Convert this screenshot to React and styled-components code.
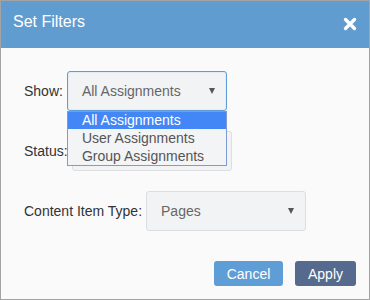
import React from "react"
import styled, { createGlobalStyle } from "styled-components"

const Global = createGlobalStyle`
  html, body {
    margin: 0;
    padding: 0;
    background: #fff;
  }
  body {
    font-family: "Liberation Sans", Arial, sans-serif;
  }
`

const Dialog = styled.div`
  box-sizing: border-box;
  width: 370px;
  height: 300px;
  border: 1px solid #a3a3a3;
  background: #fafafa;
  display: flex;
  flex-direction: column;
`

const Header = styled.header`
  height: 47px;
  background: #619cd1;
  display: flex;
  align-items: center;
  justify-content: space-between;
  padding: 0 12px 0 12px;
  box-sizing: border-box;
`

const Title = styled.h2`
  margin: 0;
  margin-top: -6px;
  font-size: 16px;
  font-weight: normal;
  color: #fff;
`

const Close = styled.button`
  border: 0;
  background: none;
  padding: 0;
  width: 14px;
  height: 14px;
  display: flex;
  cursor: pointer;
  margin-top: -1px;
`

const Body = styled.div`
  flex: 1;
  padding: 23px 13px 0 23px;
  display: flex;
  flex-direction: column;
  gap: 20px;
`

const Row = styled.div`
  display: flex;
  align-items: center;
  gap: 4px;
  position: relative;
  z-index: ${({ $top }) => ($top ? 2 : 1)};
`

const Label = styled.label`
  font-size: 14px;
  color: #333;
`

const Select = styled.div`
  position: relative;
  box-sizing: border-box;
  width: 160px;
  height: 40px;
  border: 1px solid ${({ $focus }) => ($focus ? "#5d9ddb" : "#dcdee2")};
  box-shadow: ${({ $focus }) => ($focus ? "inset 0 0 0 1px #e4ecf6" : "none")};
  border-radius: 3px;
  background: #f2f3f5;
  display: flex;
  align-items: center;
  padding: 0 0 0 14px;
  font-size: 14px;
  color: #666;
`

const Arrow = styled.span`
  position: absolute;
  right: 11px;
  top: 50%;
  margin-top: -3px;
  width: 0;
  height: 0;
  border-left: 3.5px solid transparent;
  border-right: 3.5px solid transparent;
  border-top: 6px solid #555;
`

const Menu = styled.ul`
  position: absolute;
  left: -1px;
  top: calc(100% + 1px);
  width: 160px;
  box-sizing: border-box;
  margin: 0;
  padding: 0;
  list-style: none;
  background: #f3f4f6;
  border: 1px solid #7f9bd6;
`

const Option = styled.li`
  height: ${({ $active }) => ($active ? 17 : 18)}px;
  line-height: ${({ $active }) => ($active ? 17 : 18)}px;
  padding-left: 14px;
  font-size: 14px;
  color: ${({ $active }) => ($active ? "#fff" : "#555")};
  background: ${({ $active }) => ($active ? "#4287f5" : "transparent")};
`

const Footer = styled.div`
  display: flex;
  justify-content: flex-end;
  gap: 12px;
  padding: 0 13px 13px 0;
`

const Button = styled.button`
  height: 25px;
  width: ${({ $w }) => $w}px;
  border: 0;
  border-radius: 3px;
  font-family: "Liberation Sans", Arial, sans-serif;
  font-size: 14px;
  color: #fff;
  background: ${({ $primary }) => ($primary ? "#566a8d" : "#5f9dd6")};
  padding: 0;
  cursor: pointer;
`

export default function App() {
  const options = ["All Assignments", "User Assignments", "Group Assignments"]
  return (
    <>
      <Global />
      <Dialog>
        <Header>
          <Title>Set Filters</Title>
          <Close aria-label="Close">
            <svg width="14" height="14" viewBox="0 0 14 14">
              <path d="M2.5 2.5 L11.5 11.5 M11.5 2.5 L2.5 11.5" stroke="#fff" strokeWidth="3.4" strokeLinecap="round" />
            </svg>
          </Close>
        </Header>
        <Body>
          <Row $top>
            <Label>Show:</Label>
            <Select $focus>
              All Assignments
              <Arrow />
              <Menu>
                {options.map((o, i) => (
                  <Option key={o} $active={i === 0}>{o}</Option>
                ))}
              </Menu>
            </Select>
          </Row>
          <Row>
            <Label>Status:</Label>
            <Select>
              <Arrow />
            </Select>
          </Row>
          <Row>
            <Label>Content Item Type:</Label>
            <Select>
              Pages
              <Arrow />
            </Select>
          </Row>
        </Body>
        <Footer>
          <Button $w={69}>Cancel</Button>
          <Button $w={61} $primary>Apply</Button>
        </Footer>
      </Dialog>
    </>
  )
}
